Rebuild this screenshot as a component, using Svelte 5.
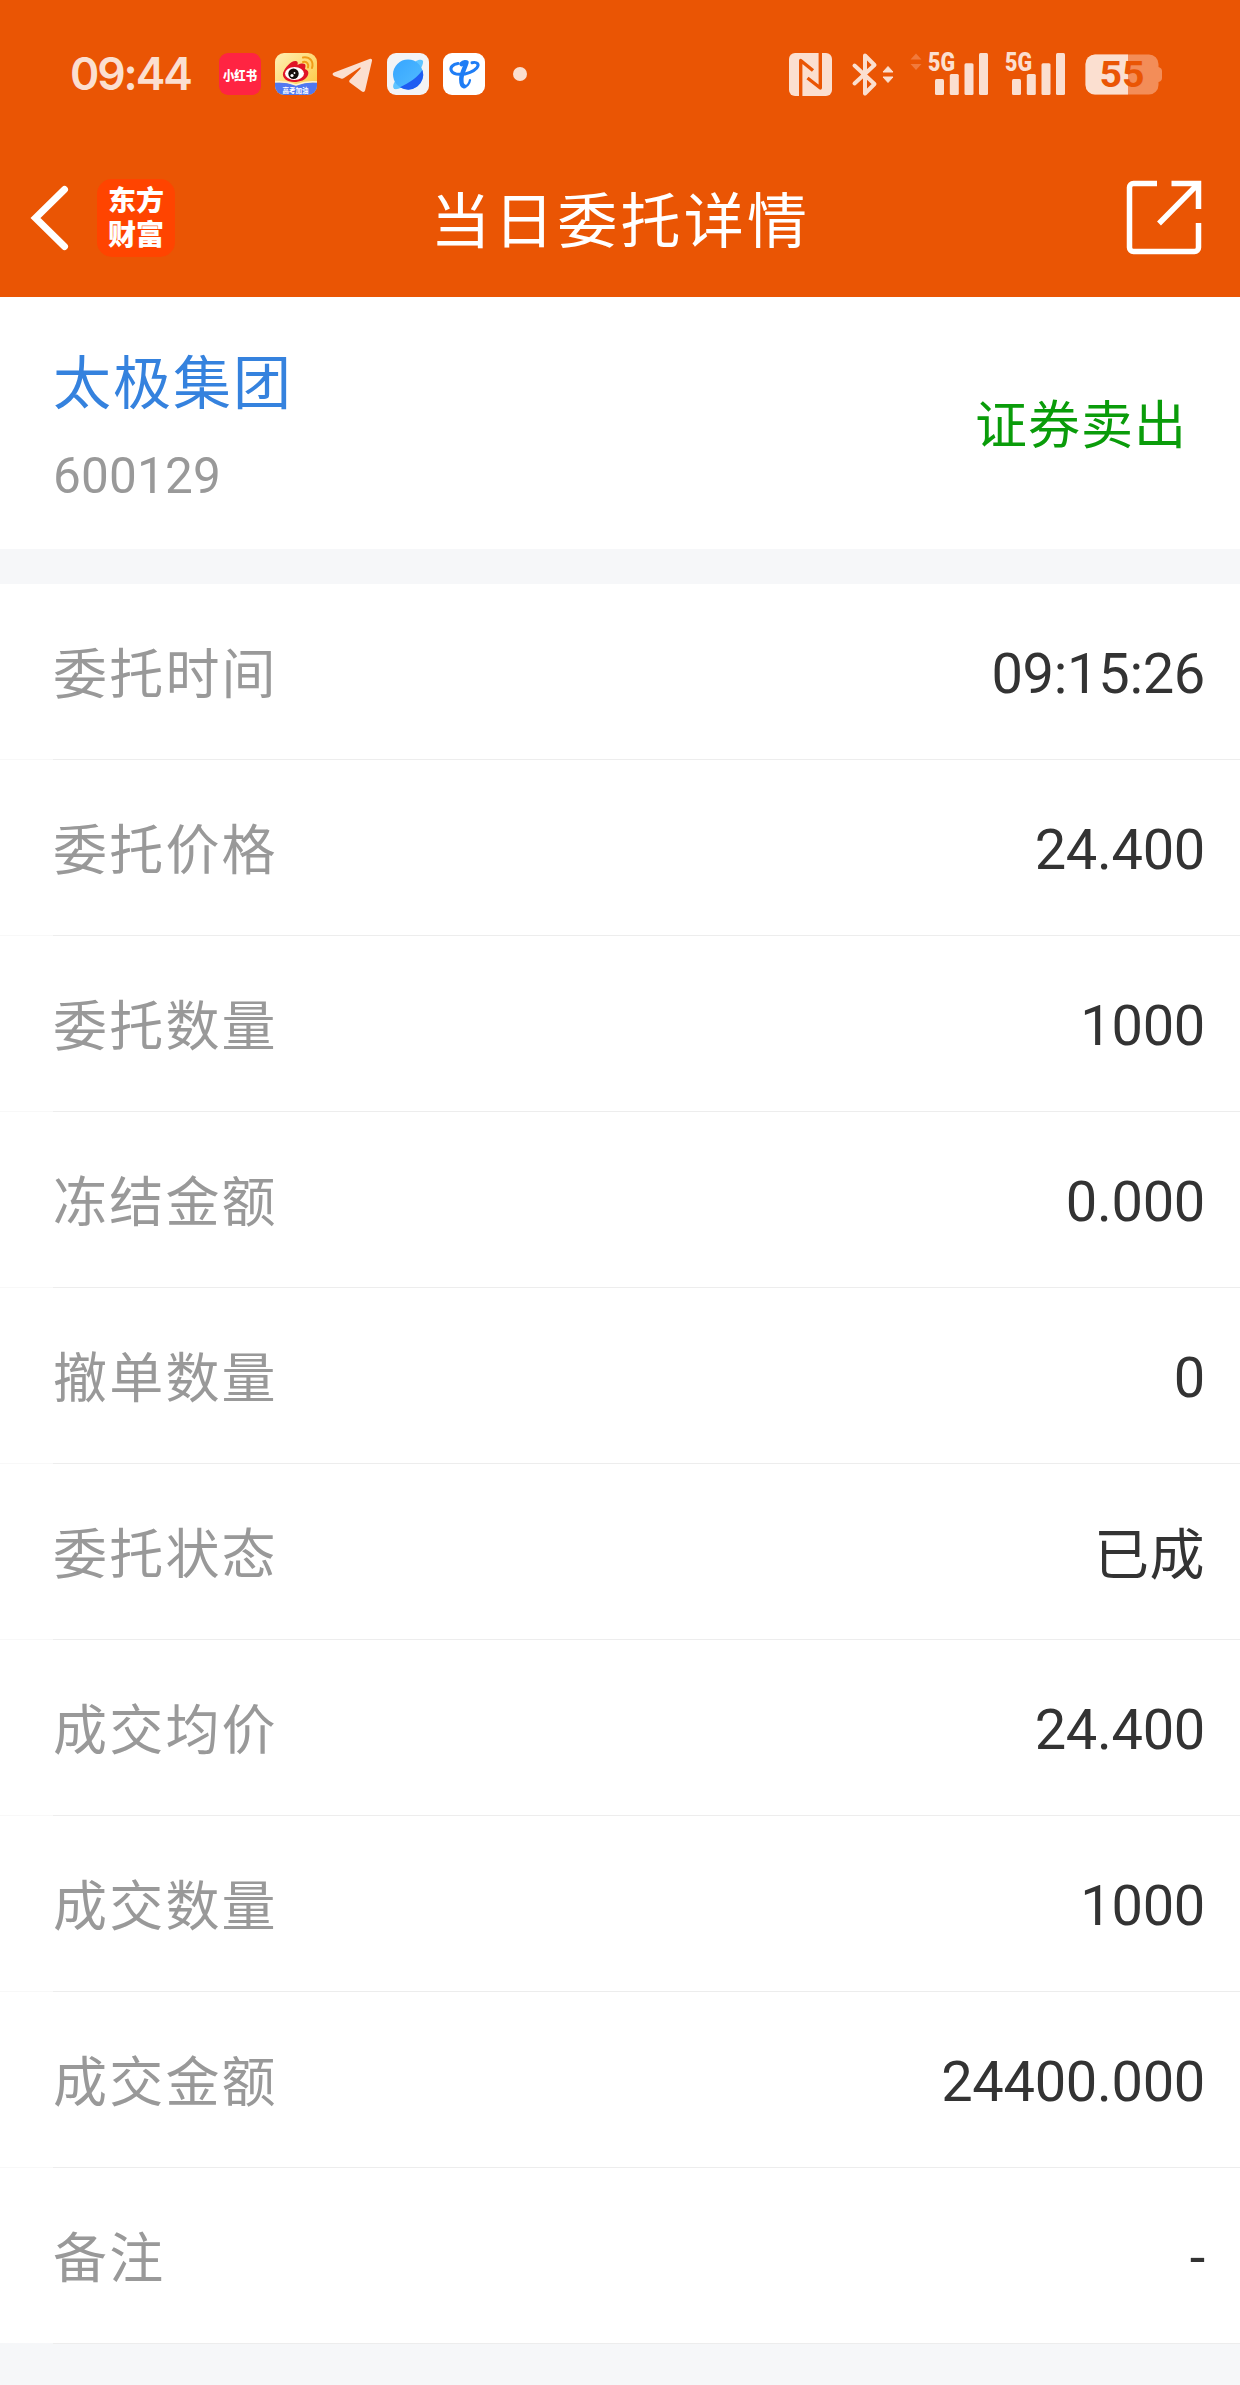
<script lang="ts">
	type Row = { label: string; value: string };

	const stock = { name: '太极集团', code: '600129', side: '证券卖出' };

	const rows: Row[] = [
		{ label: '委托时间', value: '09:15:26' },
		{ label: '委托价格', value: '24.400' },
		{ label: '委托数量', value: '1000' },
		{ label: '冻结金额', value: '0.000' },
		{ label: '撤单数量', value: '0' },
		{ label: '委托状态', value: '已成' },
		{ label: '成交均价', value: '24.400' },
		{ label: '成交数量', value: '1000' },
		{ label: '成交金额', value: '24400.000' },
		{ label: '备注', value: '-' }
	];
</script>

{#snippet signal()}
	<svg class="signal" width="60" height="44" viewBox="0 0 60 44">
		<text x="0" y="19" font-size="25" textLength="27" lengthAdjust="spacingAndGlyphs">5G</text>
		<rect x="7" y="27" width="9" height="16" rx="1.5" />
		<rect x="21.8" y="22" width="9" height="21" rx="1.5" />
		<rect x="36.5" y="11.3" width="9" height="31.7" rx="1.5" />
		<rect x="51" y="1" width="9" height="42" rx="1.5" />
	</svg>
{/snippet}

<div class="page">
	<header class="top">
		<div class="status-bar">
			<div class="status-left">
				<span class="clock">09:44</span>
				<div class="apps">
					<svg width="42" height="42" viewBox="0 0 42 42">
						<rect width="42" height="42" rx="9" fill="#ff2442" />
						<text class="cjk" x="4" y="26.5" font-size="13" font-weight="900" fill="#fff" textLength="34" lengthAdjust="spacingAndGlyphs">小红书</text>
					</svg>
					<svg width="42" height="42" viewBox="0 0 42 42">
						<defs>
							<clipPath id="weibo-clip"><rect width="42" height="42" rx="9" /></clipPath>
							<linearGradient id="weibo-bg" x1="0" y1="0" x2="1" y2="1">
								<stop offset="0" stop-color="#fff0b5" />
								<stop offset="1" stop-color="#fdc63b" />
							</linearGradient>
						</defs>
						<g clip-path="url(#weibo-clip)">
							<rect width="42" height="42" fill="url(#weibo-bg)" />
							<path d="M0 29q11 0 21 3 10-3 21-3v13H0z" fill="#5178f0" />
							<path d="M0 29q11-1 21 3 10-4 21-3" fill="none" stroke="#fff3cf" stroke-width="1.5" />
							<path d="M8 20c2-6 9-13 13-12 2 .5 2 2 1.5 4 4-2 8-2 8 1 0 1-.5 2-.5 3 3 1 4 3 3 6-2 5-8 7-14 7-7 0-12-4-11-9z" fill="#e11427" />
							<ellipse cx="19.5" cy="20.5" rx="9.5" ry="6.5" fill="#fff" />
							<circle cx="18.5" cy="20.8" r="5.2" fill="#17100f" />
							<circle cx="17" cy="22.5" r="1.6" fill="#fff" />
							<circle cx="19.5" cy="20" r=".9" fill="#fff" />
							<path d="M28 9c4-1 6 2 5 5.5M28 4.5c7-1 11 4 9 10.500" fill="none" stroke="#f29b18" stroke-width="2" stroke-linecap="round" />
							<text class="cjk" x="7.5" y="39.5" font-size="7" font-weight="700" fill="#fff" textLength="26" lengthAdjust="spacingAndGlyphs">高考加油</text>
						</g>
					</svg>
					<svg width="42" height="42" viewBox="0 0 42 42">
						<path d="M38.5 6 3 19.600c-2 .8-1.800 2.500 0 3.300l7 2.600c1 .4 2 .3 3-.4L28.500 14.800c1-.6 1.600.2.900.9L18.700 27c-.8.9-.6 2 .4 2.800l11.500 8.500c1.600 1.100 3.200.6 3.600-1.300L41 7.700c.3-1.500-.9-2.300-2.500-1.700z" fill="#fbdfd0" />
					</svg>
					<svg width="42" height="42" viewBox="0 0 42 42">
						<defs>
							<linearGradient id="planet" x1="0" y1="0" x2="1" y2="1">
								<stop offset="0" stop-color="#36a5ff" />
								<stop offset="1" stop-color="#53bdff" />
							</linearGradient>
						</defs>
						<rect width="42" height="42" rx="9" fill="#f3f3f5" />
						<path d="M29 8c4-2 8-2 7 2-1 6-8 14-15 20-6 5-13 8-14.500 5C5.500 33 7 29 9 27z" fill="#5fc4ff" />
						<circle cx="21" cy="21.5" r="15" fill="url(#planet)" />
						<path d="M35.500 17A15 15 0 0 1 13 34.200C22 30 31 24 35.500 17z" fill="#1f5df2" />
					</svg>
					<svg width="42" height="42" viewBox="0 0 42 42">
						<rect width="42" height="42" rx="9" fill="#fff" />
						<g fill="none" stroke="#1f7df5" stroke-linecap="round">
							<path d="M15 10.500C10 11 6.500 14.500 8.500 18c2.500 4.500 12 4 18.500 1.300 6-2.500 9.500-6.300 7.500-8.800-1-1.200-3.300-1.300-5.500-.8" stroke-width="3" />
							<path d="M18.500 11c1.500-1.800 3.500-2 5-1.500C21.800 15.500 18.300 20.500 18.300 26c0 4 .7 6.800 2.700 7.200" stroke-width="4.5" stroke-linejoin="round" />
							<path d="M21 34c3 0 5.500-3.500 6-7" stroke-width="2.200" />
						</g>
					</svg>
				</div>
				<span class="more-dot"></span>
			</div>

			<div class="status-right">
				<svg width="43" height="43" viewBox="0 0 43 43">
					<rect width="43" height="43" rx="6" fill="#fbdfd0" />
					<g fill="none" stroke="#ea5504" stroke-width="3.4" stroke-linejoin="round">
						<path d="M11.7 43V7.5L24 17.5" />
						<path d="M31.3 0v35L18.500 25" />
					</g>
				</svg>
				<svg class="bluetooth" width="43" height="43" viewBox="0 0 43 43">
					<path d="m2.500 12.500 20 18.500L13 40.500V2.500L22.500 12 2.500 30.500" fill="none" stroke="#fbdfd0" stroke-width="4" stroke-linejoin="round" stroke-linecap="round" />
					<path d="M36 13.500l5 5.500H31zM36 29.500l5-5.500H31z" fill="#fbdfd0" stroke="#fbdfd0" stroke-linejoin="round" />
				</svg>
				<svg class="data-arrows" width="12" height="43" viewBox="0 0 12 43">
					<path d="M6 0.500l5.500 6H.5zM6 17l5.500-6H.5z" fill="#f17a3c" />
				</svg>
				{@render signal()}
				{@render signal()}
				<svg class="battery" width="78" height="41" viewBox="0 0 78 41">
					<defs>
						<clipPath id="battery-level"><rect width="43" height="41" /></clipPath>
					</defs>
					<path d="M10 .5h54a9.500 9.500 0 0 1 9.500 9.500v3q3.500 1 3.500 4v7q0 3-3.500 4v3a9.500 9.500 0 0 1-9.500 9.500H10A9.500 9.500 0 0 1 .5 31V10A9.500 9.500 0 0 1 10 .5z" fill="#f38d58" />
					<rect x=".5" y=".5" width="73" height="40" rx="9.5" fill="#fbdfd0" clip-path="url(#battery-level)" />
					<text x="14.5" y="33" font-size="36" textLength="45" lengthAdjust="spacingAndGlyphs">55</text>
				</svg>
			</div>
		</div>

		<nav class="nav">
			<div class="nav-side">
				<svg width="38" height="66" viewBox="0 0 38 66">
					<path d="M33.5 4.5 4.5 33l29 28.5" fill="none" stroke="#fff" stroke-width="7" stroke-linecap="round" />
				</svg>
				<div class="brand"><span>东方财富</span></div>
			</div>
			<h1>当日委托详情</h1>
			<div class="nav-side end">
				<svg width="76" height="76" viewBox="0 0 76 76" fill="none" stroke="#fff" stroke-width="5.5">
					<path d="M31 3.500H7.500a4 4 0 0 0-4 4v60a4 4 0 0 0 4 4h61a4 4 0 0 0 4-4V43" />
					<path d="M45.500 3.500h27V29M72 4 33 43.500" />
				</svg>
			</div>
		</nav>
	</header>

	<section class="stock">
		<div>
			<div class="stock-name">{stock.name}</div>
			<div class="stock-code">{stock.code}</div>
		</div>
		<div class="side">{stock.side}</div>
	</section>

	<ul class="details">
		{#each rows as row}
			<li>
				<span class="label">{row.label}</span>
				<span class="value" class:text={row.value === '已成'}>{row.value}</span>
			</li>
		{/each}
	</ul>
</div>

<style>
	:global(body) {
		background: #f6f7f9;
	}

	.page {
		width: 1240px;
		min-height: 2385px;
		background: #f6f7f9;
		font-family: Roboto, 'Noto Sans CJK SC', sans-serif;
		color: #333;
	}

	.page svg {
		display: block;
		flex-shrink: 0;
		overflow: visible;
	}

	.top {
		height: 297px;
		background: #ea5504;
	}

	.status-bar {
		display: flex;
		justify-content: space-between;
		height: 148px;
		padding: 0 77px 0 70px;
		box-sizing: border-box;
		color: #fbdfd0;
	}

	.status-left,
	.status-right,
	.apps {
		display: flex;
		align-items: center;
	}

	.clock {
		width: 149px;
		font: 600 44.5px/60px Inter, sans-serif;
		letter-spacing: -2.1px;
	}

	.apps {
		gap: 14px;
	}

	.cjk {
		font-family: 'Noto Sans CJK SC', sans-serif;
	}

	.more-dot {
		width: 14px;
		height: 14px;
		margin-left: 28px;
		border-radius: 50%;
		background: #fbdfd0;
	}

	.bluetooth {
		margin-left: 20px;
	}

	.data-arrows {
		margin-left: 15px;
	}

	.signal {
		margin-left: 6px;
		fill: #fbdfd0;
		font-family: Roboto, sans-serif;
		font-weight: 900;
	}

	.signal + .signal {
		margin-left: 17px;
	}

	.battery {
		margin-left: 20px;
		fill: #ea5504;
		font-family: Roboto, sans-serif;
		font-weight: 700;
	}

	.nav {
		display: flex;
		align-items: center;
		justify-content: space-between;
		height: 139px;
		padding: 0 38px 0 31px;
	}

	.nav-side {
		display: flex;
		align-items: center;
		width: 300px;
	}

	.nav-side.end {
		justify-content: flex-end;
	}

	.brand {
		width: 78px;
		height: 78px;
		margin-left: 28px;
		padding: 3px 10px 0 11px;
		box-sizing: border-box;
		border-radius: 15px;
		background: #ff4400;
		color: #fff;
		font: 900 28px/34px 'Noto Sans CJK SC', sans-serif;
		word-break: break-all;
	}

	h1 {
		margin: 0 -8px 0 0;
		padding-bottom: 3px;
		color: #fff;
		font-size: 60px;
		font-weight: 400;
		letter-spacing: 3.3px;
	}

	.stock {
		display: flex;
		align-items: center;
		justify-content: space-between;
		height: 252px;
		padding: 0 53px;
		box-sizing: border-box;
		background: #fff;
	}

	.stock-name {
		padding-top: 8px;
		color: #3582de;
		font-size: 58px;
		line-height: 88px;
		letter-spacing: 2px;
	}

	.stock-code {
		margin-top: 10px;
		color: #999;
		font-size: 49.5px;
		line-height: 76px;
		letter-spacing: 0.2px;
	}

	.side {
		padding-bottom: 4px;
		color: #0a9c0a;
		font-size: 52px;
		letter-spacing: 1px;
	}

	.details {
		margin: 35px 0 0;
		padding: 0;
		list-style: none;
		background: #fff;
	}

	li {
		display: flex;
		align-items: center;
		justify-content: space-between;
		height: 176px;
		padding: 0 35px 0 53px;
		box-sizing: border-box;
		background: linear-gradient(90deg, #f8f8f8 53px, #ededed 53px) bottom / 100% 1px no-repeat;
	}

	li:last-child {
		background-image: linear-gradient(90deg, #f6f7f9 53px, #ededed 53px);
	}

	.label {
		padding-bottom: 3px;
		color: #999;
		font-size: 54px;
		letter-spacing: 2.2px;
	}

	.value {
		padding-top: 3px;
		font-size: 56px;
		letter-spacing: -0.3px;
	}

	.value.text {
		padding: 0 0 5px;
		font-size: 55px;
		letter-spacing: 0.5px;
	}
</style>
